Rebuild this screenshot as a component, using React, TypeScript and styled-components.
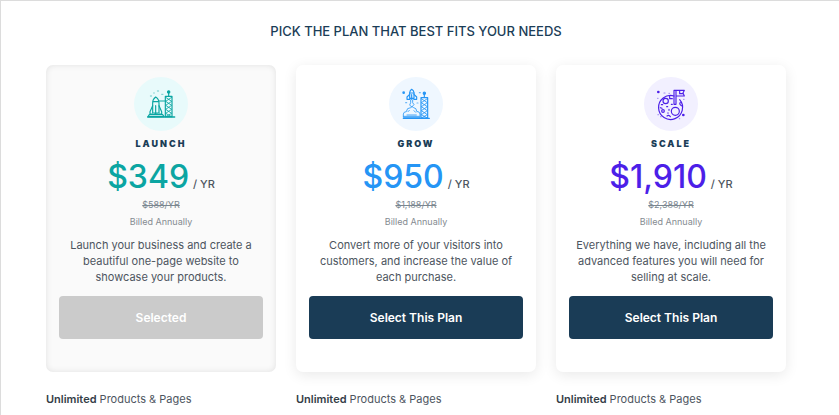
import React from "react";
import styled, { createGlobalStyle } from "styled-components";

const GlobalStyle = createGlobalStyle`
  * { box-sizing: border-box; }
  body {
    margin: 0;
    background: #fff;
    color: #4d5560;
    font-family: Inter, "Open Sans", sans-serif;
    overflow: hidden;
  }
`;

const Page = styled.main`
  min-height: 100vh;
  padding: 20px 53px 0 45px;
  border: solid #dcdcdc;
  border-width: 1px 0 0 1px;
`;

const Title = styled.h1`
  margin: 0 0 24px;
  font-size: 13px;
  font-weight: 500;
  line-height: 20px;
  text-align: center;
  color: #1b3d57;
`;

const Plans = styled.div`
  display: grid;
  grid-template-columns: 23fr 24fr 23fr;
  column-gap: 20px;
`;

const Plan = styled.section`
  display: flex;
  flex-direction: column;
  gap: 19px;
`;

const Card = styled.div<{ $selected: boolean }>`
  display: flex;
  flex-direction: column;
  align-items: center;
  padding: 12px 13px 33px;
  border-radius: 7px;
  text-align: center;
  background: ${(p) => (p.$selected ? "#fafafa" : "#fff")};
  box-shadow: ${(p) =>
    p.$selected
      ? "inset 0 0 6px rgba(0, 0, 0, 0.1)"
      : "0 3px 14px rgba(0, 0, 0, 0.09)"};
`;

const Badge = styled.div<{ $tint: string; $accent: string }>`
  width: 54px;
  height: 54px;
  border-radius: 50%;
  background: ${(p) => p.$tint};
  color: ${(p) => p.$accent};

  svg {
    display: block;
    width: 100%;
    height: 100%;
    fill: none;
    stroke: currentColor;
    stroke-width: 3.5;
    stroke-linejoin: round;
    stroke-linecap: round;
  }
`;

const Name = styled.h2`
  margin: 5px 0 5px;
  font-size: 9px;
  font-weight: 900;
  line-height: 16px;
  letter-spacing: 2px;
  color: #1b3d57;
`;

const Price = styled.div`
  display: flex;
  align-items: baseline;
  gap: 4px;
`;

const Amount = styled.span<{ $accent: string }>`
  font-size: 32px;
  font-weight: 500;
  line-height: 40px;
  color: ${(p) => p.$accent};
`;

const Period = styled.span`
  font-size: 11px;
  font-weight: 500;
  line-height: 16px;
`;

const OldPrice = styled.s`
  font-size: 9px;
  line-height: 16px;
  color: #7b8790;
`;

const Billing = styled.span`
  margin-top: 1px;
  font-size: 9px;
  line-height: 16px;
  color: #858b91;
`;

const Description = styled.p`
  margin: 7px 0 11px;
  padding: 0 6px;
  font-size: 11px;
  line-height: 16px;
`;

const Choose = styled.button`
  width: 100%;
  height: 43px;
  padding: 0;
  border: 0;
  border-radius: 4px;
  background: #1a3c56;
  color: #fff;
  font: 600 12px/20px Inter, sans-serif;
  cursor: pointer;

  &:disabled {
    background: #cbcbcb;
    cursor: default;
  }
`;

const Feature = styled.p`
  margin: 0;
  font-size: 11px;
  line-height: 16px;

  strong {
    font-weight: 600;
    color: #343d47;
  }
`;

const Tower = () => (
  <>
    <path d="M136 78h20v61h-20z" />
    <path d="m137 81 18 12-18 12 18 12-18 12 18 10M155 81l-18 12 18 12-18 12 18 12-18 10" strokeWidth="2.5" />
    <path d="M146 77V67" />
    <circle cx="146" cy="65" r="3.5" fill="currentColor" />
  </>
);

const LaunchIcon = () => (
  <svg viewBox="42 20 162 162" aria-hidden="true">
    <Tower />
    <path d="M83 140h81" strokeWidth="4" />
    <path d="M98 128V98q0-12 9-18 10 6 10 18v30z" />
    <path d="M100 94h15M107 106v23M98 106l-8 18v7h8M117 106l8 18v7h-8M103 131h10M117 92h19" />
    <path d="M88 133h40l4 6H84z" />
    <path d="M91 77h4M112 62h4M125 72h4M101 68h2" strokeWidth="2.5" opacity=".65" />
  </svg>
);

const GrowIcon = () => (
  <svg viewBox="40 20 162 162" aria-hidden="true">
    <g transform="translate(0 4)">
      <Tower />
    </g>
    <path d="M83 144h78" strokeWidth="4" />
    <path d="M102 84V67q1-7 6-10 6 3 7 10v17z" />
    <path d="M102 72l-8 8v7h8l3-3M115 72l8 8v7h-8l-3-3M108 73v14M102 68h13" />
    <path d="M105 89v8l-3 7 6 6 7-7-4-6v-8" strokeWidth="2.5" />
    <path d="M83 140v-9q1-7 9-7 1-12 13-12 4-6 9 0 9 1 9 11 10 1 10 8v9zM97 124l4-4M115 121l5 5M94 134h28M84 138h47" strokeWidth="2.5" />
    <circle cx="84" cy="67" r="4" fill="currentColor" stroke="none" />
    <path d="M131 67h3M90 97h3M124 98h3" opacity=".65" />
  </svg>
);

const ScaleIcon = () => (
  <svg viewBox="37 20 162 162" aria-hidden="true">
    <path d="M127 77a36 36 0 1 0 17 11" />
    <path d="M127 102V60h6v42zM133 60h25l-4 8 4 9h-25M144 63v7h11" />
    <circle cx="102" cy="92" r="8" />
    <circle cx="131" cy="123" r="12" />
    <circle cx="94" cy="122" r="4" />
    <path d="M114 77v8h8M89 103h4M105 109h3M112 117v3M119 102h3M108 128h2M106 137q5-5 10 2M146 96q-5 6 5 11M86 112l5 2" />
    <circle cx="80" cy="65" r="4" fill="currentColor" stroke="none" />
    <circle cx="155" cy="134" r="4" fill="currentColor" stroke="none" />
    <path d="M97 68h3M112 69h1M78 84h1M156 87h1M79 133h1M87 139h1M143 145h1" opacity=".5" />
  </svg>
);

const plans = [
  {
    name: "LAUNCH",
    price: "$349",
    oldPrice: "$588/YR",
    text: "Launch your business and create a beautiful one-page website to showcase your products.",
    accent: "#0ba5a2",
    tint: "#e8fafb",
    Icon: LaunchIcon,
    selected: true,
  },
  {
    name: "GROW",
    price: "$950",
    oldPrice: "$1,188/YR",
    text: "Convert more of your visitors into customers, and increase the value of each purchase.",
    accent: "#2595f5",
    tint: "#eff7ff",
    Icon: GrowIcon,
    selected: false,
  },
  {
    name: "SCALE",
    price: "$1,910",
    oldPrice: "$2,388/YR",
    text: "Everything we have, including all the advanced features you will need for selling at scale.",
    accent: "#4c1fe8",
    tint: "#f2f0ff",
    Icon: ScaleIcon,
    selected: false,
  },
];

export default function App() {
  return (
    <>
      <GlobalStyle />
      <Page>
        <Title>PICK THE PLAN THAT BEST FITS YOUR NEEDS</Title>
        <Plans>
          {plans.map(({ name, price, oldPrice, text, accent, tint, Icon, selected }) => (
            <Plan key={name}>
              <Card $selected={selected}>
                <Badge $tint={tint} $accent={accent}>
                  <Icon />
                </Badge>
                <Name>{name}</Name>
                <Price>
                  <Amount $accent={accent}>{price}</Amount>
                  <Period>/ YR</Period>
                </Price>
                <OldPrice>{oldPrice}</OldPrice>
                <Billing>Billed Annually</Billing>
                <Description>{text}</Description>
                <Choose type="button" disabled={selected}>
                  {selected ? "Selected" : "Select This Plan"}
                </Choose>
              </Card>
              <Feature>
                <strong>Unlimited</strong> Products &amp; Pages
              </Feature>
            </Plan>
          ))}
        </Plans>
      </Page>
    </>
  );
}
